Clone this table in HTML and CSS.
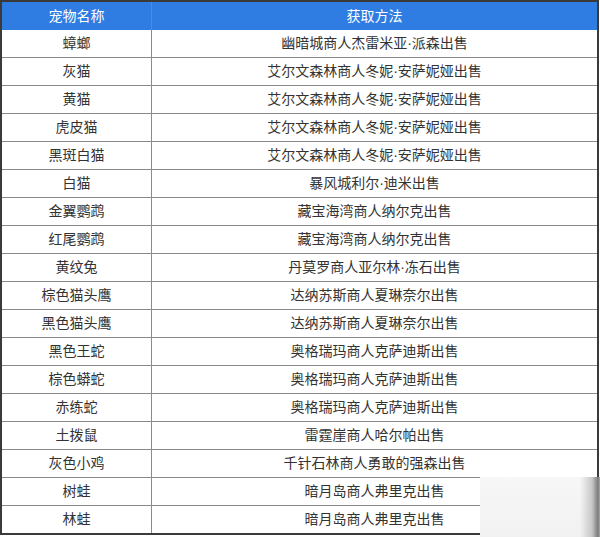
FILE: index.html
```html
<!DOCTYPE html>
<html lang="zh-CN">
<head>
<meta charset="utf-8">
<title>宠物获取方法</title>
<link rel="stylesheet" href="styles.css">
</head>
<body>
<div class="frame">
  <table class="pets">
    <thead>
      <tr><th class="c1">宠物名称</th><th class="c2">获取方法</th></tr>
    </thead>
    <tbody>
      <tr><td>蟑螂</td><td>幽暗城商人杰雷米亚·派森出售</td></tr>
      <tr><td>灰猫</td><td>艾尔文森林商人冬妮·安萨妮娅出售</td></tr>
      <tr><td>黄猫</td><td>艾尔文森林商人冬妮·安萨妮娅出售</td></tr>
      <tr><td>虎皮猫</td><td>艾尔文森林商人冬妮·安萨妮娅出售</td></tr>
      <tr><td>黑斑白猫</td><td>艾尔文森林商人冬妮·安萨妮娅出售</td></tr>
      <tr><td>白猫</td><td>暴风城利尔·迪米出售</td></tr>
      <tr><td>金翼鹦鹉</td><td>藏宝海湾商人纳尔克出售</td></tr>
      <tr><td>红尾鹦鹉</td><td>藏宝海湾商人纳尔克出售</td></tr>
      <tr><td>黄纹兔</td><td>丹莫罗商人亚尔林·冻石出售</td></tr>
      <tr><td>棕色猫头鹰</td><td>达纳苏斯商人夏琳奈尔出售</td></tr>
      <tr><td>黑色猫头鹰</td><td>达纳苏斯商人夏琳奈尔出售</td></tr>
      <tr><td>黑色王蛇</td><td>奥格瑞玛商人克萨迪斯出售</td></tr>
      <tr><td>棕色蟒蛇</td><td>奥格瑞玛商人克萨迪斯出售</td></tr>
      <tr><td>赤练蛇</td><td>奥格瑞玛商人克萨迪斯出售</td></tr>
      <tr><td>土拨鼠</td><td>雷霆崖商人哈尔帕出售</td></tr>
      <tr><td>灰色小鸡</td><td>千针石林商人勇敢的强森出售</td></tr>
      <tr><td>树蛙</td><td>暗月岛商人弗里克出售</td></tr>
      <tr><td>林蛙</td><td>暗月岛商人弗里克出售</td></tr>
    </tbody>
  </table>
</div>
<div class="watermark"></div>
</body>
</html>
```

FILE: styles.css
```css
html, body {
  margin: 0;
  padding: 0;
  background: #ffffff;
}

body {
  width: 600px;
  height: 537px;
  overflow: hidden;
  position: relative;
  font-family: "Liberation Sans", "Noto Sans CJK SC", sans-serif;
}

.frame {
  width: 595px;
  border: 2px solid #3a3a3a;
}

.pets {
  width: 100%;
  border-collapse: collapse;
  table-layout: fixed;
}

.pets th {
  height: 28px;
  padding: 0;
  background: #2f7de2;
  color: #ffffff;
  font-size: 14px;
  font-weight: normal;
  text-align: center;
  line-height: 28px;
}

.pets th.c1 {
  width: 149px;
  border-right: 1px solid #4a8be4;
}

.pets td {
  height: 27px;
  padding: 0;
  font-size: 14px;
  color: #333333;
  text-align: center;
  line-height: 27px;
  border-top: 1px solid #8a8a8a;
}

.pets td:first-child {
  border-right: 1px solid #8a8a8a;
}

.pets tbody tr:first-child td {
  border-top: none;
}

.watermark {
  position: absolute;
  left: 480px;
  top: 477px;
  width: 120px;
  height: 60px;
  background:
    linear-gradient(to right, rgba(255,255,255,0) 0, rgba(255,255,255,0) 100px, rgba(170,170,170,0.6) 112px, rgba(110,110,110,0.9) 118px, rgba(150,150,150,0.8) 120px),
    linear-gradient(to bottom, #f7f7f7, #f1f1f1);
}
```
